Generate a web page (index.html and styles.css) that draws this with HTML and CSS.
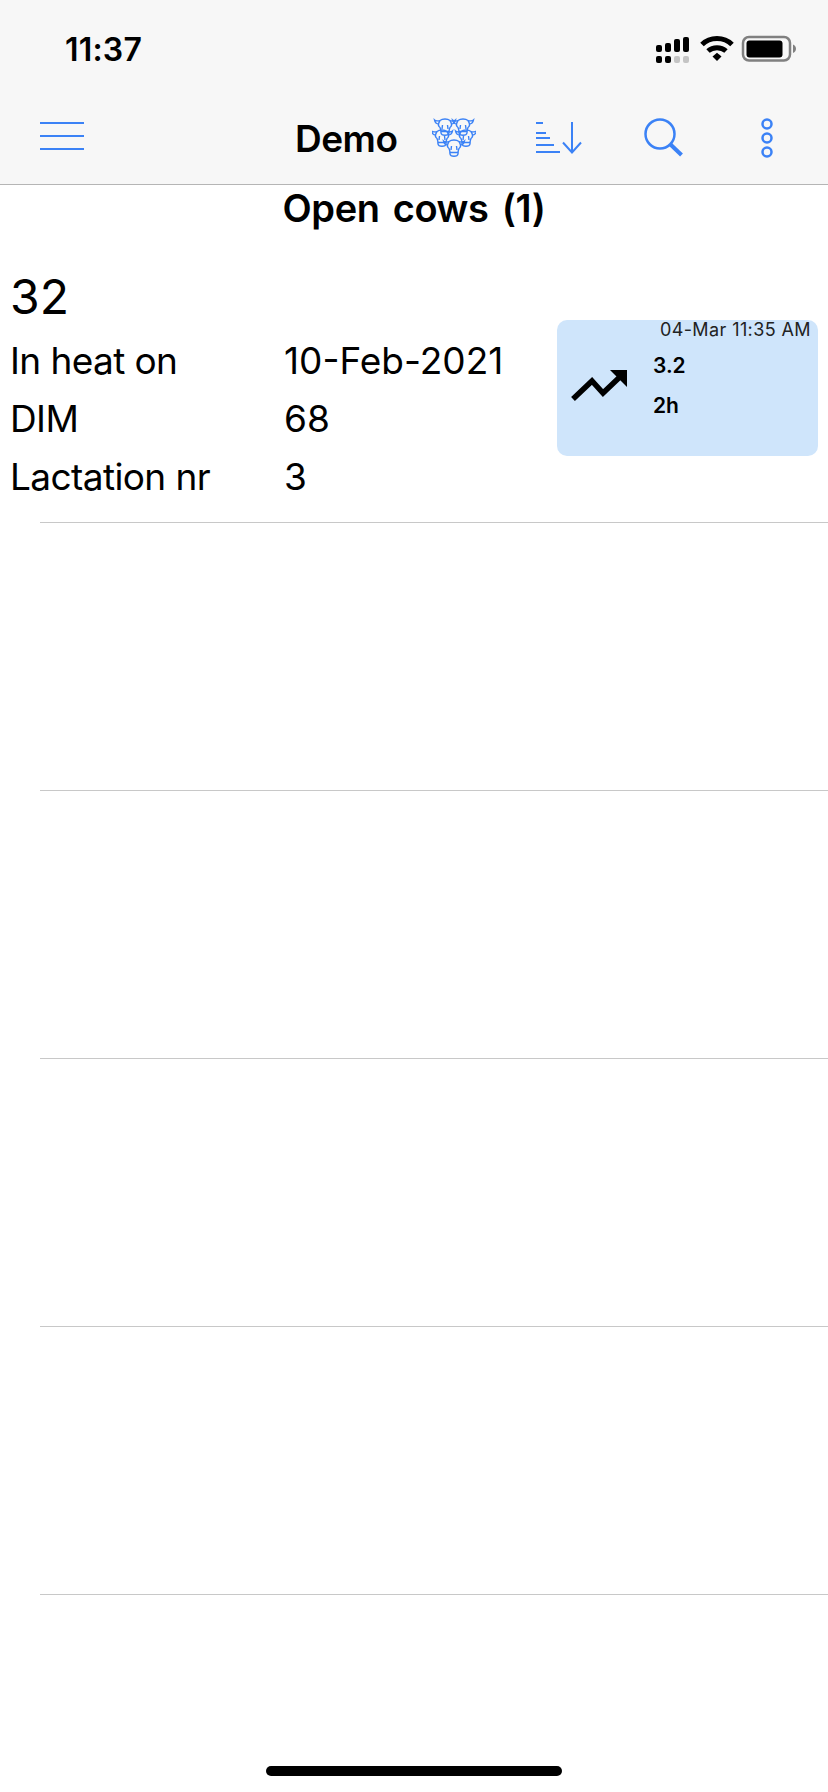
FILE: index.html
```html
<!DOCTYPE html>
<html lang="en">
<head>
<meta charset="UTF-8">
<meta name="viewport" content="width=device-width, initial-scale=1.0">
<title>Open cows - Demo</title>
<link rel="stylesheet" href="styles.css">
</head>
<body>
<header class="top">
  <div class="status">
    <span class="time">11:37</span>
    <svg class="status-icons" width="140" height="28" viewBox="0 0 140 28">
      <!-- signal -->
      <rect x="0" y="10" width="6" height="7" rx="2"/>
      <rect x="9" y="8" width="6" height="9" rx="2"/>
      <rect x="18" y="4" width="6" height="13" rx="2"/>
      <rect x="27" y="2" width="6" height="15" rx="2"/>
      <rect x="0" y="21" width="6" height="7" rx="2"/>
      <rect x="9" y="21" width="6" height="7" rx="2"/>
      <rect x="18" y="21" width="6" height="7" rx="2" fill="#c4c4c4"/>
      <rect x="27" y="21" width="6" height="7" rx="2" fill="#c4c4c4"/>
      <!-- wifi -->
      <path d="M46 9.500C54 1.500 68 1.500 76 9.500" class="wifi"/>
      <path d="M52 16C57 11.500 65 11.500 70 16" class="wifi"/>
      <path d="M56.500 21.500L61 17.800Q61 17.800 65.500 21.500L61 26Z"/>
      <!-- battery -->
      <rect x="87" y="2" width="47" height="23.500" rx="6" class="batt-frame"/>
      <rect x="90.500" y="5.500" width="36" height="17" rx="3"/>
      <path d="M137 9.500C139 10.200 140 12 140 13.800C140 15.600 139 17.400 137 18Z" fill="#808080"/>
    </svg>
  </div>
  <nav class="bar">
    <svg class="menu-icon" width="44" height="30" viewBox="0 0 44 30">
      <path d="M0 2H44M0 15H44M0 28H44"/>
    </svg>
    <span class="bar-title">Demo</span>
    <svg class="herd-icon" width="44" height="42" viewBox="0 0 44 42">
      <defs>
        <g id="cow">
          <path d="M-5-7C-7.500-7.500-9-6.500-10.500-8C-10-5-8-4-6-4M5-7C7.500-7.500 9-6.500 10.500-8C10-5 8-4 6-4"/>
          <path d="M-5-7.500C-2.500-9.500 2.500-9.500 5-7.500C7-4.500 7-2 5-.5C4 1.500 4 3 4 5C3.500 8-3.500 8-4 5C-4 3-4 1.500-5-.5C-7-2-7-4.500-5-7.500Z"/>
          <path d="M-4 3.500H4M-2.500-3L-3 1M2.500-3L3 1"/>
        </g>
      </defs>
      <use href="#cow" x="13" y="11"/>
      <use href="#cow" x="31" y="11"/>
      <use href="#cow" x="10" y="22"/>
      <use href="#cow" x="34" y="22"/>
      <use href="#cow" x="22" y="32"/>
    </svg>
    <svg class="sort-icon" width="46" height="32" viewBox="0 0 46 32">
      <path d="M0 1H7M0 11H10M0 16H14M0 23H18M0 30H24"/>
      <path d="M36 0V30M27 20.500L36 30.500L45 20.500"/>
    </svg>
    <svg class="search-icon" width="40" height="40" viewBox="0 0 40 40">
      <circle cx="16" cy="16" r="14.500"/>
      <path d="M26 26L37.500 37" class="search-handle"/>
    </svg>
    <svg class="more-icon" width="12" height="40" viewBox="0 0 12 40">
      <circle cx="6" cy="6" r="4.500"/>
      <circle cx="6" cy="20" r="4.500"/>
      <circle cx="6" cy="34" r="4.500"/>
    </svg>
  </nav>
</header>

<main>
  <h1 class="list-title"><span>Open cows</span> <span>(1)</span></h1>

  <section class="cow-row">
    <div class="cow-info">
      <div class="cow-number">32</div>
      <div class="cow-line"><span class="cow-label">In heat on</span><span>10-Feb-2021</span></div>
      <div class="cow-line"><span class="cow-label">DIM</span><span>68</span></div>
      <div class="cow-line"><span class="cow-label">Lactation nr</span><span>3</span></div>
    </div>
    <div class="alert-card">
      <div class="alert-time">04-Mar 11:35 AM</div>
      <div class="alert-body">
        <svg class="trend-icon" width="58" height="36" viewBox="0 0 58 36">
          <path d="M2 31L21 13L32 25L52 6" class="trend-line"/>
          <path d="M39 2H56V19Z"/>
        </svg>
        <div class="alert-values">
          <div>3.2</div>
          <div>2h</div>
        </div>
      </div>
    </div>
  </section>

  <div class="empty-row"></div>
  <div class="empty-row"></div>
  <div class="empty-row"></div>
  <div class="empty-row"></div>
</main>

<div class="home-bar"></div>
</body>
</html>
```

FILE: styles.css
```css
body{margin:0;height:1792px;overflow:hidden;position:relative;background:#fff;color:#000;font-family:'Inter','Liberation Sans',sans-serif;}
.top{background:#f7f7f7;border-bottom:1px solid #b5b5b5;height:184px;}
.status{height:88px;display:flex;justify-content:space-between;align-items:flex-start;padding:0 32px 0 65px;}
.time{font-size:32px;font-weight:600;line-height:36px;margin-top:32px;letter-spacing:0.2px;}
.status-icons{margin-top:35px;}
.wifi{fill:none;stroke:#000;stroke-width:5;}
.batt-frame{fill:none;stroke:#808080;stroke-width:2.500;}
.bar{height:96px;display:flex;align-items:center;padding-left:40px;}
.bar svg{flex:none;}
.menu-icon path,.sort-icon path{fill:none;stroke:#3b82f6;stroke-width:2;}
.bar-title{font-size:37px;font-weight:600;margin:4px 0 0 211px;width:101px;letter-spacing:-0.5px;}
.herd-icon{margin:4px 0 0 36px;}
.herd-icon path{fill:none;stroke:#3b82f6;stroke-width:1.400;}
.sort-icon{margin:4px 0 0 60px;}
.search-icon{margin:4px 0 0 62px;}
.search-icon circle{fill:none;stroke:#3b82f6;stroke-width:2.500;}
.search-handle{fill:none;stroke:#3b82f6;stroke-width:4;}
.more-icon{margin:4px 0 0 77px;}
.more-icon circle{fill:none;stroke:#3b82f6;stroke-width:2.500;}
.list-title{margin:0;padding-top:1px;font-size:38px;font-weight:600;line-height:44px;text-align:center;letter-spacing:-0.4px;word-spacing:4px;}
.cow-row{height:293px;box-sizing:border-box;display:flex;justify-content:space-between;padding:0 10px 0 10px;position:relative;}
.cow-row::after{content:"";position:absolute;left:40px;right:0;bottom:0;border-bottom:1px solid #c8c8c8;}
.cow-number{font-size:48px;line-height:65px;margin-top:34px;padding-bottom:3px;font-weight:400;}
.cow-line{display:flex;font-size:37px;line-height:58px;}
.cow-label{width:274px;letter-spacing:-0.6px;}
.alert-card{width:261px;height:136px;margin-top:90px;border-radius:10px;background:#cfe5fb;}
.alert-time{font-size:18px;line-height:20px;text-align:right;padding:0 7px 0 0;color:#222;letter-spacing:0.4px;}
.alert-body{display:flex;align-items:flex-start;}
.trend-icon{margin:28px 0 0 14px;flex:none;}
.trend-line{fill:none;stroke:#000;stroke-width:5.500;}
.alert-values{margin:0 0 0 24px;font-size:21px;font-weight:600;line-height:40px;padding-top:6px;}
.empty-row{height:267px;margin-left:40px;border-bottom:1px solid #c8c8c8;}
.home-bar{position:absolute;left:266px;top:1766px;width:296px;height:10px;border-radius:5px;background:#000;}
```
